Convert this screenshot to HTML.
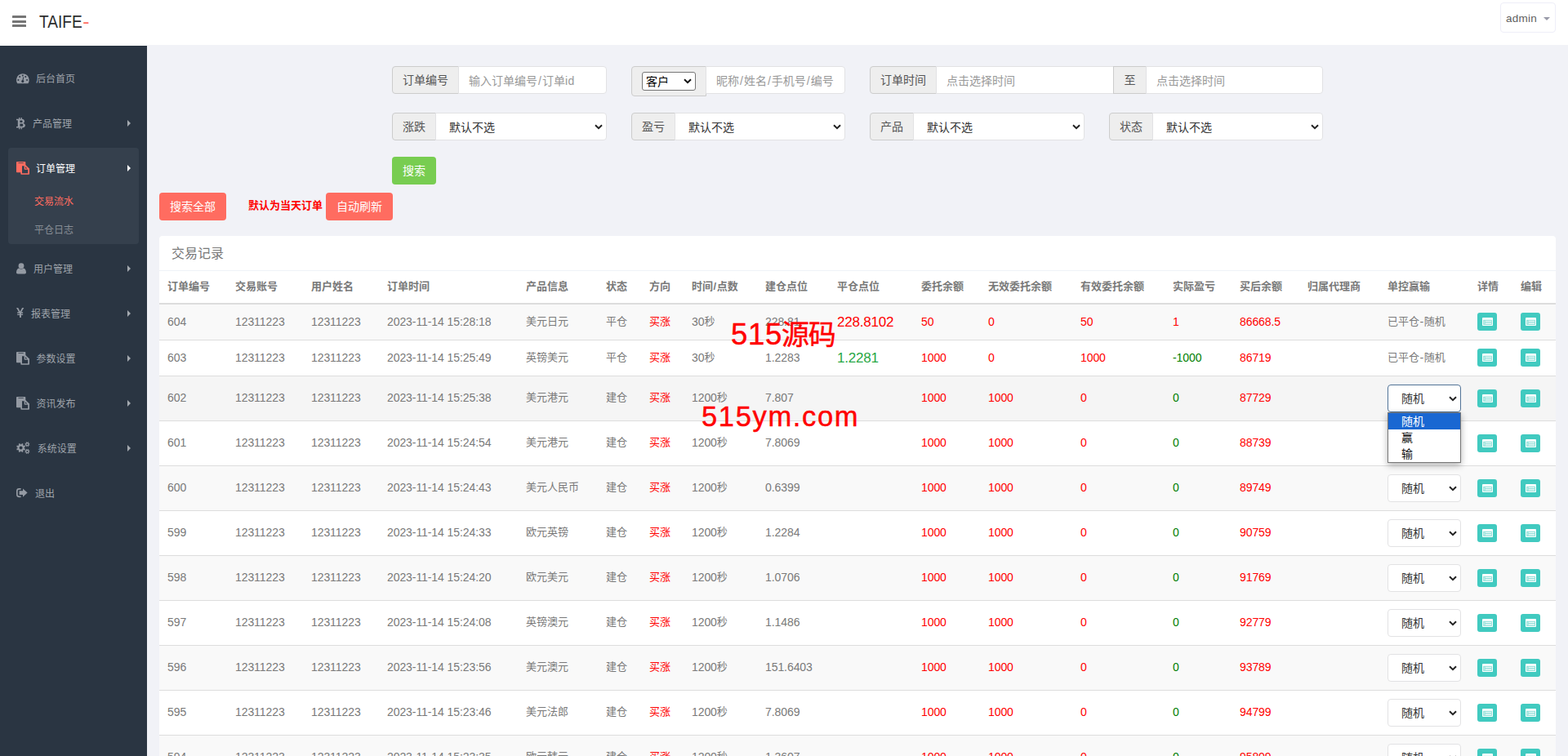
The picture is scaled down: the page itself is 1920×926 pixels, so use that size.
<!DOCTYPE html>
<html lang="zh-CN"><head><meta charset="utf-8"><title>交易记录</title>
<style>
*{box-sizing:border-box;margin:0;padding:0}
html,body{width:1920px;height:926px;overflow:hidden}
body{position:relative;background:#f1f2f7;color:#797979;font-family:"Liberation Sans","Noto Sans CJK SC",sans-serif;font-size:13px;line-height:1.42857}
.abs{position:absolute}
#header{position:absolute;left:0;top:0;width:1920px;height:55px;background:#fff}
#burger{position:absolute;left:15px;top:19px;width:17px;height:14px}
#burger i{position:absolute;left:0;width:17px;height:3px;background:#767676;border-radius:.5px}
#logo{position:absolute;left:48px;top:12px;font-size:22.600px;line-height:30px;color:#2e2e2e;white-space:nowrap;transform:scaleX(.845);transform-origin:0 50%}
#logo span{color:#ff6c60;display:inline-block;transform:scaleX(1.3);transform-origin:0 50%;margin-left:.8px}
#user{position:absolute;left:1837px;top:3px;width:68px;height:37px;border:1px solid #eeeef8;border-radius:4px;background:#fff;color:#606060;font-size:13.500px;line-height:37px;padding-left:6px;white-space:nowrap;letter-spacing:.25px}
#user b{position:absolute;left:52px;top:17px;width:0;height:0;border-left:4px solid transparent;border-right:4px solid transparent;border-top:4px solid #999aa8}
#side{position:absolute;left:0;top:56px;width:180px;height:870px;background:#2a3542;box-shadow:0 -1px 0 #fff}
#side .act{position:absolute;left:10px;top:125px;width:160px;height:118px;background:#35404d;border-radius:4px}
.mi{position:absolute;left:0;width:180px;height:20px;line-height:20px;font-size:12px;color:#9fa4ab;white-space:nowrap}
.mi svg{position:absolute;overflow:visible}
.mi .t{position:absolute;top:1px}
.mi .ar{position:absolute;left:156px;top:6px;width:0;height:0;border-top:4px solid transparent;border-bottom:4px solid transparent;border-left:4px solid #a4a9af}
.mi.on{color:#fff}
.mi.on .ar{border-left-color:#fff}
.grp{position:absolute;height:34px}
.addon{position:absolute;top:0;left:0;height:34px;background:#eee;border:1px solid #ccc;border-radius:4px 0 0 4px;color:#555;font-size:14px;line-height:32px;text-align:center;white-space:nowrap}
.inp{position:absolute;top:0;height:34px;background:#fff;border:1px solid #e2e2e4;border-radius:0 4px 4px 0;font-size:14px;line-height:32px;padding-left:12px;padding-top:1px;color:#999;white-space:nowrap;overflow:hidden}
.sel{color:#333;padding-left:16px}
.chev{position:absolute;right:4.400px;top:13px;width:10px;height:7px}
.btn{position:absolute;height:34px;border-radius:4px;color:#fff;font-size:14px;line-height:34px;text-align:center;white-space:nowrap}
#panel{position:absolute;left:195px;top:289px;width:1710px;height:700px;background:#fff;border-radius:4px 4px 0 0}
#ptitle{position:absolute;left:15px;top:10px;font-size:16px;line-height:23px;color:#797979;font-weight:400}
#pline{position:absolute;left:0;top:42px;width:1710px;height:1px;background:#eff2f7}
table{position:absolute;left:0;top:43px;width:1710px;border-collapse:collapse;table-layout:fixed;font-size:13px}
th,td{padding:0 0 0 10px;text-align:left;vertical-align:middle;white-space:nowrap;overflow:visible;font-weight:400}
th{height:40px;border-bottom:2px solid #ddd;font-weight:700;color:#797979}
td{border-top:1px solid #ddd;line-height:20px}
.n{font-size:14px;line-height:1;letter-spacing:-.08px;position:relative;top:1px}
tr.s td{height:44px}
tr.s:first-child td{padding-bottom:.5px}
tr.b td{height:55px;padding-bottom:1px}
tr.b .ib,tr.b .ts{top:1px}
tr.o td{background:#f9f9f9}
tr.h td{background:#f5f5f5}
.sl{font-style:normal;padding:0 1px}
.r{color:#f00}.g{color:#008000}
.big{font-size:17px;line-height:1;letter-spacing:-.2px;position:relative;top:2px}
.lg{color:#28a745}
.rd{color:#f00}
.ib{display:block;width:24px;height:22px;border-radius:3px;background:#41cac0;position:relative}
.ib svg{position:absolute;left:6px;top:6.200px}
.ts{display:block;position:relative;width:90px;height:34px;border:1px solid #e2e2e4;border-radius:4px;background:#fff;color:#333;font-size:14px;line-height:32px;padding-left:16px;letter-spacing:0}
.ts.f{border-color:#517397}
#pop{position:absolute;left:1699px;top:505px;width:90px;height:62px;background:#fff;border:1px solid #767676;box-shadow:0 3px 8px rgba(0,0,0,.3);font-size:14px;color:#111;z-index:5}
#pop div{height:20px;line-height:20px;padding-left:16px}
#pop .hl{background:#1967d2;color:#fff}
.wm{position:absolute;color:#f00;white-space:nowrap;font-family:"Liberation Sans","Noto Sans CJK SC",sans-serif;z-index:4;-webkit-text-stroke:.45px #f00}
.wm span{display:inline-block;vertical-align:baseline}
</style></head><body>
<div id="header"><div id="burger"><i style="top:0"></i><i style="top:5.500px"></i><i style="top:11px"></i></div><div id="logo">TAIFE<span>-</span></div><div id="user">admin<b></b></div></div>
<div id="side"><div class="act"></div>
<div class="mi" style="top:30px"><svg style="left:19.7px;top:3.9px" width="15.7" height="12.3" viewBox="0 0 15.700 12.300" fill="#949aa3"><path d="M1.300 12.300A7.850 7.850 0 1 1 14.400 12.300Z"/><g fill="#2a3542"><circle cx="7.800" cy="2.400" r="1"/><circle cx="4.200" cy="4" r="1"/><circle cx="11.300" cy="4" r="1"/><circle cx="2.400" cy="7.900" r="1"/><circle cx="13.100" cy="7.900" r="1"/><circle cx="7.800" cy="9.600" r="1.550"/><path d="M8.300 4.300l.9.200-.8 4.800-1.100-.2z"/></g></svg><span class="t" style="left:44px">后台首页</span></div>
<div class="mi" style="top:85px"><svg style="left:20px;top:2.8px" width="11" height="14.2" viewBox="0 0 11 14.200" fill="#949aa3"><path fill-rule="evenodd" d="M0 1.700H6.500C8.800 1.700 10 2.900 10 4.600C10 5.700 9.400 6.500 8.500 6.900C9.900 7.300 10.900 8.200 10.900 9.600C10.900 11.600 9.400 12.500 7 12.500H0V10.900H1.800V3.300H0ZM4.400 3.400V6H6.200C7.100 6 7.600 5.500 7.600 4.700C7.600 3.900 7.100 3.400 6.200 3.400ZM4.400 7.600V10.800H6.600C7.700 10.800 8.300 10.200 8.300 9.200C8.300 8.200 7.700 7.600 6.600 7.600Z"/><path d="M3.100 0h1.300v2H3.100zM5.600 0h1.300v2H5.600zM3.100 12.200h1.300v2H3.100zM5.600 12.200h1.300v2H5.600z"/></svg><span class="t" style="left:40px">产品管理</span><span class="ar"></span></div>
<div class="mi on" style="top:140px"><svg style="left:19.9px;top:1.8px" width="16" height="15.8" viewBox="0 0 16 15.800" fill="#ff6c60"><path d="M.8 0h9.700c.4 0 .8.400.8.800V13.200H.8c-.4 0-.8-.4-.8-.8V.8C0 .4.400 0 .800 0z"/><rect x="2.300" y="1.300" width="6.600" height=".8" rx=".4" fill="#35404d"/><path d="M5.300 4.100h5.900l4.800 4.300v6.600c0 .4-.4.800-.8.800H6.100c-.4 0-.8-.4-.8-.8z"/><path d="M7 5.300h2.700v3.700c0 .4.300.7.700.7h3.800v4.500H7z" fill="#35404d"/><path d="M11 6.100l2.100 2.300H11z" fill="#35404d"/></svg><span class="t" style="left:44px">订单管理</span><span class="ar"></span></div>
<div class="mi" style="top:180px;color:#ff6c60"><span class="t" style="left:42px">交易流水</span></div>
<div class="mi" style="top:215px;color:#878d95"><span class="t" style="left:42px">平仓日志</span></div>
<div class="mi" style="top:263px"><svg style="left:20px;top:2.5px" width="12" height="13.5" viewBox="0 0 12 13.500" fill="#949aa3"><circle cx="6" cy="3.700" r="3.400"/><path d="M0 11.700c0-3 1.400-5 3.100-5.300.8.700 1.800 1.100 2.900 1.100s2.100-.4 2.900-1.100c1.700.3 3.100 2.300 3.100 5.300 0 1-.8 1.700-1.800 1.700H1.800c-1 0-1.800-.7-1.800-1.700z"/></svg><span class="t" style="left:41px">用户管理</span><span class="ar"></span></div>
<div class="mi" style="top:318px"><svg style="left:19.8px;top:2.9px" width="9.3" height="12" viewBox="0 0 9.300 12" fill="#949aa3"><path d="M4 12V9.100H1.200V7.700H4V6.700H1.200V5.300h1.900L0 0h2.200l2.400 4.400h.1L7.100 0h2.200L6.200 5.300h1.900v1.400H5.900v1h2.200v1.400H5.900V12z"/></svg><span class="t" style="left:38px">报表管理</span><span class="ar"></span></div>
<div class="mi" style="top:373px"><svg style="left:19.9px;top:1.8px" width="16" height="15.8" viewBox="0 0 16 15.800" fill="#949aa3"><path d="M.8 0h9.700c.4 0 .8.400.8.800V13.200H.8c-.4 0-.8-.4-.8-.8V.8C0 .4.400 0 .800 0z"/><rect x="2.300" y="1.300" width="6.600" height=".8" rx=".4" fill="#2a3542"/><path d="M5.300 4.100h5.900l4.800 4.300v6.600c0 .4-.4.800-.8.800H6.100c-.4 0-.8-.4-.8-.8z"/><path d="M7 5.300h2.700v3.700c0 .4.300.7.700.7h3.800v4.500H7z" fill="#2a3542"/><path d="M11 6.100l2.100 2.300H11z" fill="#2a3542"/></svg><span class="t" style="left:44.6px">参数设置</span><span class="ar"></span></div>
<div class="mi" style="top:428px"><svg style="left:19.9px;top:1.8px" width="16" height="15.8" viewBox="0 0 16 15.800" fill="#949aa3"><path d="M.8 0h9.700c.4 0 .8.400.8.800V13.200H.8c-.4 0-.8-.4-.8-.8V.8C0 .4.400 0 .800 0z"/><rect x="2.300" y="1.300" width="6.600" height=".8" rx=".4" fill="#2a3542"/><path d="M5.300 4.100h5.900l4.800 4.300v6.600c0 .4-.4.800-.8.800H6.100c-.4 0-.8-.4-.8-.8z"/><path d="M7 5.300h2.700v3.700c0 .4.300.7.700.7h3.800v4.500H7z" fill="#2a3542"/><path d="M11 6.100l2.100 2.300H11z" fill="#2a3542"/></svg><span class="t" style="left:44.5px">资讯发布</span><span class="ar"></span></div>
<div class="mi" style="top:483px"><svg style="left:19.7px;top:2.2px" width="16.5" height="15.1" viewBox="0 0 16.500 15.100" fill="#949aa3"><path fill-rule="evenodd" d="M9.75 8.16L11.05 8.81L10.37 10.43L9.00 9.97L8.07 10.90L8.53 12.27L6.91 12.95L6.26 11.65L4.94 11.65L4.29 12.95L2.67 12.27L3.13 10.90L2.20 9.97L0.83 10.43L0.15 8.81L1.45 8.16L1.45 6.84L0.15 6.19L0.83 4.57L2.20 5.03L3.13 4.10L2.67 2.73L4.29 2.05L4.94 3.35L6.26 3.35L6.91 2.05L8.53 2.73L8.07 4.10L9.00 5.03L10.37 4.57L11.05 6.19L9.75 6.84ZM3.60 7.50a2.00 2.00 0 1 0 4.00 0a2.00 2.00 0 1 0 -4.00 0ZM15.57 3.54L16.41 3.92L16.04 4.82L15.18 4.49L14.69 4.98L15.02 5.84L14.12 6.21L13.74 5.37L13.06 5.37L12.68 6.21L11.78 5.84L12.11 4.98L11.62 4.49L10.76 4.82L10.39 3.92L11.23 3.54L11.23 2.86L10.39 2.48L10.76 1.58L11.62 1.91L12.11 1.42L11.78 0.56L12.68 0.19L13.06 1.03L13.74 1.03L14.12 0.19L15.02 0.56L14.69 1.42L15.18 1.91L16.04 1.58L16.41 2.48L15.57 2.86ZM12.40 3.20a1.00 1.00 0 1 0 2.00 0a1.00 1.00 0 1 0 -2.00 0ZM15.57 12.24L16.41 12.62L16.04 13.52L15.18 13.19L14.69 13.68L15.02 14.54L14.12 14.91L13.74 14.07L13.06 14.07L12.68 14.91L11.78 14.54L12.11 13.68L11.62 13.19L10.76 13.52L10.39 12.62L11.23 12.24L11.23 11.56L10.39 11.18L10.76 10.28L11.62 10.61L12.11 10.12L11.78 9.26L12.68 8.89L13.06 9.73L13.74 9.73L14.12 8.89L15.02 9.26L14.69 10.12L15.18 10.61L16.04 10.28L16.41 11.18L15.57 11.56ZM12.40 11.90a1.00 1.00 0 1 0 2.00 0a1.00 1.00 0 1 0 -2.00 0Z"/></svg><span class="t" style="left:45.8px">系统设置</span><span class="ar"></span></div>
<div class="mi" style="top:538px"><svg style="left:19.7px;top:4.2px" width="13.6" height="11.2" viewBox="0 0 13.600 11.200" fill="#949aa3"><path d="M5.600 0v1.700H3.400c-.9 0-1.700.8-1.700 1.700v4.400c0 .9.800 1.700 1.700 1.700h2.200v1.700H3.400A3.400 3.400 0 0 1 0 7.800V3.400A3.400 3.400 0 0 1 3.400 0z"/><path d="M8 .4l5.600 5.200L8 10.800V7.900H3.600V3.300H8z"/></svg><span class="t" style="left:43px">退出</span></div>
</div>
<div class="grp" style="left:480px;top:81px;width:263px"><span class="addon" style="left:0px;width:82px;">订单编号</span><span class="inp" style="left:81px;width:182px;">输入订单编号<i class="sl">/</i>订单<span style="letter-spacing:.6px">id</span></span></div>
<div class="grp" style="left:773px;top:81px;width:262px"><span class="addon" style="left:0;width:92px;height:37px"></span><span class="abs" style="left:13px;top:7px;width:66px;height:23px;border:1px solid #767676;border-radius:3px;background:#fff;color:#000;font-size:14px;line-height:22px;padding-left:4px">客户<svg class="abs" style="right:4px;top:7px" width="10" height="7" viewBox="0 0 10 7"><path d="M1 1.200 L5 5.200 L9 1.200" fill="none" stroke="#111" stroke-width="2"/></svg></span><span class="inp" style="left:91px;width:171px;">昵称<i class="sl">/</i>姓名<i class="sl">/</i>手机号<i class="sl">/</i>编号</span></div>
<div class="grp" style="left:1065px;top:81px;width:555px"><span class="addon" style="left:0px;width:82px;">订单时间</span><span class="inp" style="left:81px;width:218px;border-radius:0">点击选择时间</span><span class="addon" style="left:298px;width:41px;border-radius:0">至</span><span class="inp" style="left:338px;width:217px;">点击选择时间</span></div>
<div class="grp" style="left:480px;top:138px;width:263px"><span class="addon" style="left:0px;width:54px;">涨跌</span><span class="inp sel" style="left:53px;width:210px">默认不选<svg class="chev" viewBox="0 0 10 7"><path d="M1 1.2 L5 5.2 L9 1.2" fill="none" stroke="#222" stroke-width="2"/></svg></span></div>
<div class="grp" style="left:773px;top:138px;width:262px"><span class="addon" style="left:0px;width:54px;">盈亏</span><span class="inp sel" style="left:53px;width:209px">默认不选<svg class="chev" viewBox="0 0 10 7"><path d="M1 1.2 L5 5.2 L9 1.2" fill="none" stroke="#222" stroke-width="2"/></svg></span></div>
<div class="grp" style="left:1065px;top:138px;width:263px"><span class="addon" style="left:0px;width:54px;">产品</span><span class="inp sel" style="left:53px;width:210px">默认不选<svg class="chev" viewBox="0 0 10 7"><path d="M1 1.2 L5 5.2 L9 1.2" fill="none" stroke="#222" stroke-width="2"/></svg></span></div>
<div class="grp" style="left:1358px;top:138px;width:262px"><span class="addon" style="left:0px;width:54px;">状态</span><span class="inp sel" style="left:53px;width:209px">默认不选<svg class="chev" viewBox="0 0 10 7"><path d="M1 1.2 L5 5.2 L9 1.2" fill="none" stroke="#222" stroke-width="2"/></svg></span></div>
<span class="btn" style="left:480px;top:192px;width:54px;background:#78cd51">搜索</span>
<span class="btn" style="left:195px;top:236px;width:82px;background:#ff6c60">搜索全部</span>
<span class="abs" style="left:304px;top:242px;color:#f00;font-weight:700;font-size:13px;line-height:20px;white-space:nowrap">默认为当天订单</span>
<span class="btn" style="left:399px;top:236px;width:82px;background:#ff6c60">自动刷新</span>
<div id="panel"><div id="ptitle">交易记录</div><div id="pline"></div>
<table><colgroup><col style="width:83px"><col style="width:93px"><col style="width:93px"><col style="width:170px"><col style="width:98px"><col style="width:53px"><col style="width:52px"><col style="width:90px"><col style="width:88px"><col style="width:103px"><col style="width:82px"><col style="width:113px"><col style="width:113px"><col style="width:82px"><col style="width:83px"><col style="width:98px"><col style="width:110px"><col style="width:53px"><col style="width:53px"></colgroup><thead><tr><th>订单编号</th><th>交易账号</th><th>用户姓名</th><th>订单时间</th><th>产品信息</th><th>状态</th><th>方向</th><th>时间<i class="sl" style="padding:0 .5px">/</i>点数</th><th>建仓点位</th><th>平仓点位</th><th>委托余额</th><th>无效委托余额</th><th>有效委托余额</th><th>实际盈亏</th><th>买后余额</th><th>归属代理商</th><th>单控赢输</th><th>详情</th><th>编辑</th></tr></thead><tbody><tr class="s o"><td><span class="n">604</span></td><td><span class="n">12311223</span></td><td><span class="n">12311223</span></td><td><span class="n">2023-11-14 15:28:18</span></td><td>美元日元</td><td>平仓</td><td class="r">买涨</td><td><span class="n">30</span>秒</td><td><span class="n">228.81</span></td><td><span class="big rd">228.8102</span></td><td class="r"><span class="n">50</span></td><td class="r"><span class="n">0</span></td><td class="r"><span class="n">50</span></td><td class="r"><span class="n">1</span></td><td class="r"><span class="n">86668.5</span></td><td></td><td>已平仓<span class="n" style="padding:0 .6px">-</span>随机</td><td><span class="ib"><svg width="13" height="10" viewBox="0 0 13 10"><rect x="0" y="0" width="13" height="10" rx="1" fill="#fff"/><rect x="1.100" y="2.800" width="10.800" height="6.100" fill="#8fe0d9"/><rect x="3.600" y="3.900" width="7.400" height="1" fill="#fff"/><rect x="3.600" y="6.100" width="7.400" height="1.700" fill="#e3f7f5"/><rect x="1.900" y="3.900" width=".9" height="3.900" fill="#c8efeb"/></svg></span></td><td><span class="ib"><svg width="13" height="10" viewBox="0 0 13 10"><rect x="0" y="0" width="13" height="10" rx="1" fill="#fff"/><rect x="1.100" y="2.800" width="10.800" height="6.100" fill="#8fe0d9"/><rect x="3.600" y="3.900" width="7.400" height="1" fill="#fff"/><rect x="3.600" y="6.100" width="7.400" height="1.700" fill="#e3f7f5"/><rect x="1.900" y="3.900" width=".9" height="3.900" fill="#c8efeb"/></svg></span></td></tr><tr class="s"><td><span class="n">603</span></td><td><span class="n">12311223</span></td><td><span class="n">12311223</span></td><td><span class="n">2023-11-14 15:25:49</span></td><td>英镑美元</td><td>平仓</td><td class="r">买涨</td><td><span class="n">30</span>秒</td><td><span class="n">1.2283</span></td><td><span class="big lg">1.2281</span></td><td class="r"><span class="n">1000</span></td><td class="r"><span class="n">0</span></td><td class="r"><span class="n">1000</span></td><td class="g"><span class="n">-1000</span></td><td class="r"><span class="n">86719</span></td><td></td><td>已平仓<span class="n" style="padding:0 .6px">-</span>随机</td><td><span class="ib"><svg width="13" height="10" viewBox="0 0 13 10"><rect x="0" y="0" width="13" height="10" rx="1" fill="#fff"/><rect x="1.100" y="2.800" width="10.800" height="6.100" fill="#8fe0d9"/><rect x="3.600" y="3.900" width="7.400" height="1" fill="#fff"/><rect x="3.600" y="6.100" width="7.400" height="1.700" fill="#e3f7f5"/><rect x="1.900" y="3.900" width=".9" height="3.900" fill="#c8efeb"/></svg></span></td><td><span class="ib"><svg width="13" height="10" viewBox="0 0 13 10"><rect x="0" y="0" width="13" height="10" rx="1" fill="#fff"/><rect x="1.100" y="2.800" width="10.800" height="6.100" fill="#8fe0d9"/><rect x="3.600" y="3.900" width="7.400" height="1" fill="#fff"/><rect x="3.600" y="6.100" width="7.400" height="1.700" fill="#e3f7f5"/><rect x="1.900" y="3.900" width=".9" height="3.900" fill="#c8efeb"/></svg></span></td></tr><tr class="b o h"><td><span class="n">602</span></td><td><span class="n">12311223</span></td><td><span class="n">12311223</span></td><td><span class="n">2023-11-14 15:25:38</span></td><td>美元港元</td><td>建仓</td><td class="r">买涨</td><td><span class="n">1200</span>秒</td><td><span class="n">7.807</span></td><td></td><td class="r"><span class="n">1000</span></td><td class="r"><span class="n">1000</span></td><td class="r"><span class="n">0</span></td><td class="g"><span class="n">0</span></td><td class="r"><span class="n">87729</span></td><td></td><td><span class="ts f">随机<svg class="chev" viewBox="0 0 10 7"><path d="M1 1.2 L5 5.2 L9 1.2" fill="none" stroke="#222" stroke-width="2"/></svg></span></td><td><span class="ib"><svg width="13" height="10" viewBox="0 0 13 10"><rect x="0" y="0" width="13" height="10" rx="1" fill="#fff"/><rect x="1.100" y="2.800" width="10.800" height="6.100" fill="#8fe0d9"/><rect x="3.600" y="3.900" width="7.400" height="1" fill="#fff"/><rect x="3.600" y="6.100" width="7.400" height="1.700" fill="#e3f7f5"/><rect x="1.900" y="3.900" width=".9" height="3.900" fill="#c8efeb"/></svg></span></td><td><span class="ib"><svg width="13" height="10" viewBox="0 0 13 10"><rect x="0" y="0" width="13" height="10" rx="1" fill="#fff"/><rect x="1.100" y="2.800" width="10.800" height="6.100" fill="#8fe0d9"/><rect x="3.600" y="3.900" width="7.400" height="1" fill="#fff"/><rect x="3.600" y="6.100" width="7.400" height="1.700" fill="#e3f7f5"/><rect x="1.900" y="3.900" width=".9" height="3.900" fill="#c8efeb"/></svg></span></td></tr><tr class="b"><td><span class="n">601</span></td><td><span class="n">12311223</span></td><td><span class="n">12311223</span></td><td><span class="n">2023-11-14 15:24:54</span></td><td>美元港元</td><td>建仓</td><td class="r">买涨</td><td><span class="n">1200</span>秒</td><td><span class="n">7.8069</span></td><td></td><td class="r"><span class="n">1000</span></td><td class="r"><span class="n">1000</span></td><td class="r"><span class="n">0</span></td><td class="g"><span class="n">0</span></td><td class="r"><span class="n">88739</span></td><td></td><td></td><td><span class="ib"><svg width="13" height="10" viewBox="0 0 13 10"><rect x="0" y="0" width="13" height="10" rx="1" fill="#fff"/><rect x="1.100" y="2.800" width="10.800" height="6.100" fill="#8fe0d9"/><rect x="3.600" y="3.900" width="7.400" height="1" fill="#fff"/><rect x="3.600" y="6.100" width="7.400" height="1.700" fill="#e3f7f5"/><rect x="1.900" y="3.900" width=".9" height="3.900" fill="#c8efeb"/></svg></span></td><td><span class="ib"><svg width="13" height="10" viewBox="0 0 13 10"><rect x="0" y="0" width="13" height="10" rx="1" fill="#fff"/><rect x="1.100" y="2.800" width="10.800" height="6.100" fill="#8fe0d9"/><rect x="3.600" y="3.900" width="7.400" height="1" fill="#fff"/><rect x="3.600" y="6.100" width="7.400" height="1.700" fill="#e3f7f5"/><rect x="1.900" y="3.900" width=".9" height="3.900" fill="#c8efeb"/></svg></span></td></tr><tr class="b o"><td><span class="n">600</span></td><td><span class="n">12311223</span></td><td><span class="n">12311223</span></td><td><span class="n">2023-11-14 15:24:43</span></td><td>美元人民币</td><td>建仓</td><td class="r">买涨</td><td><span class="n">1200</span>秒</td><td><span class="n">0.6399</span></td><td></td><td class="r"><span class="n">1000</span></td><td class="r"><span class="n">1000</span></td><td class="r"><span class="n">0</span></td><td class="g"><span class="n">0</span></td><td class="r"><span class="n">89749</span></td><td></td><td><span class="ts">随机<svg class="chev" viewBox="0 0 10 7"><path d="M1 1.2 L5 5.2 L9 1.2" fill="none" stroke="#222" stroke-width="2"/></svg></span></td><td><span class="ib"><svg width="13" height="10" viewBox="0 0 13 10"><rect x="0" y="0" width="13" height="10" rx="1" fill="#fff"/><rect x="1.100" y="2.800" width="10.800" height="6.100" fill="#8fe0d9"/><rect x="3.600" y="3.900" width="7.400" height="1" fill="#fff"/><rect x="3.600" y="6.100" width="7.400" height="1.700" fill="#e3f7f5"/><rect x="1.900" y="3.900" width=".9" height="3.900" fill="#c8efeb"/></svg></span></td><td><span class="ib"><svg width="13" height="10" viewBox="0 0 13 10"><rect x="0" y="0" width="13" height="10" rx="1" fill="#fff"/><rect x="1.100" y="2.800" width="10.800" height="6.100" fill="#8fe0d9"/><rect x="3.600" y="3.900" width="7.400" height="1" fill="#fff"/><rect x="3.600" y="6.100" width="7.400" height="1.700" fill="#e3f7f5"/><rect x="1.900" y="3.900" width=".9" height="3.900" fill="#c8efeb"/></svg></span></td></tr><tr class="b"><td><span class="n">599</span></td><td><span class="n">12311223</span></td><td><span class="n">12311223</span></td><td><span class="n">2023-11-14 15:24:33</span></td><td>欧元英镑</td><td>建仓</td><td class="r">买涨</td><td><span class="n">1200</span>秒</td><td><span class="n">1.2284</span></td><td></td><td class="r"><span class="n">1000</span></td><td class="r"><span class="n">1000</span></td><td class="r"><span class="n">0</span></td><td class="g"><span class="n">0</span></td><td class="r"><span class="n">90759</span></td><td></td><td><span class="ts">随机<svg class="chev" viewBox="0 0 10 7"><path d="M1 1.2 L5 5.2 L9 1.2" fill="none" stroke="#222" stroke-width="2"/></svg></span></td><td><span class="ib"><svg width="13" height="10" viewBox="0 0 13 10"><rect x="0" y="0" width="13" height="10" rx="1" fill="#fff"/><rect x="1.100" y="2.800" width="10.800" height="6.100" fill="#8fe0d9"/><rect x="3.600" y="3.900" width="7.400" height="1" fill="#fff"/><rect x="3.600" y="6.100" width="7.400" height="1.700" fill="#e3f7f5"/><rect x="1.900" y="3.900" width=".9" height="3.900" fill="#c8efeb"/></svg></span></td><td><span class="ib"><svg width="13" height="10" viewBox="0 0 13 10"><rect x="0" y="0" width="13" height="10" rx="1" fill="#fff"/><rect x="1.100" y="2.800" width="10.800" height="6.100" fill="#8fe0d9"/><rect x="3.600" y="3.900" width="7.400" height="1" fill="#fff"/><rect x="3.600" y="6.100" width="7.400" height="1.700" fill="#e3f7f5"/><rect x="1.900" y="3.900" width=".9" height="3.900" fill="#c8efeb"/></svg></span></td></tr><tr class="b o"><td><span class="n">598</span></td><td><span class="n">12311223</span></td><td><span class="n">12311223</span></td><td><span class="n">2023-11-14 15:24:20</span></td><td>欧元美元</td><td>建仓</td><td class="r">买涨</td><td><span class="n">1200</span>秒</td><td><span class="n">1.0706</span></td><td></td><td class="r"><span class="n">1000</span></td><td class="r"><span class="n">1000</span></td><td class="r"><span class="n">0</span></td><td class="g"><span class="n">0</span></td><td class="r"><span class="n">91769</span></td><td></td><td><span class="ts">随机<svg class="chev" viewBox="0 0 10 7"><path d="M1 1.2 L5 5.2 L9 1.2" fill="none" stroke="#222" stroke-width="2"/></svg></span></td><td><span class="ib"><svg width="13" height="10" viewBox="0 0 13 10"><rect x="0" y="0" width="13" height="10" rx="1" fill="#fff"/><rect x="1.100" y="2.800" width="10.800" height="6.100" fill="#8fe0d9"/><rect x="3.600" y="3.900" width="7.400" height="1" fill="#fff"/><rect x="3.600" y="6.100" width="7.400" height="1.700" fill="#e3f7f5"/><rect x="1.900" y="3.900" width=".9" height="3.900" fill="#c8efeb"/></svg></span></td><td><span class="ib"><svg width="13" height="10" viewBox="0 0 13 10"><rect x="0" y="0" width="13" height="10" rx="1" fill="#fff"/><rect x="1.100" y="2.800" width="10.800" height="6.100" fill="#8fe0d9"/><rect x="3.600" y="3.900" width="7.400" height="1" fill="#fff"/><rect x="3.600" y="6.100" width="7.400" height="1.700" fill="#e3f7f5"/><rect x="1.900" y="3.900" width=".9" height="3.900" fill="#c8efeb"/></svg></span></td></tr><tr class="b"><td><span class="n">597</span></td><td><span class="n">12311223</span></td><td><span class="n">12311223</span></td><td><span class="n">2023-11-14 15:24:08</span></td><td>英镑澳元</td><td>建仓</td><td class="r">买涨</td><td><span class="n">1200</span>秒</td><td><span class="n">1.1486</span></td><td></td><td class="r"><span class="n">1000</span></td><td class="r"><span class="n">1000</span></td><td class="r"><span class="n">0</span></td><td class="g"><span class="n">0</span></td><td class="r"><span class="n">92779</span></td><td></td><td><span class="ts">随机<svg class="chev" viewBox="0 0 10 7"><path d="M1 1.2 L5 5.2 L9 1.2" fill="none" stroke="#222" stroke-width="2"/></svg></span></td><td><span class="ib"><svg width="13" height="10" viewBox="0 0 13 10"><rect x="0" y="0" width="13" height="10" rx="1" fill="#fff"/><rect x="1.100" y="2.800" width="10.800" height="6.100" fill="#8fe0d9"/><rect x="3.600" y="3.900" width="7.400" height="1" fill="#fff"/><rect x="3.600" y="6.100" width="7.400" height="1.700" fill="#e3f7f5"/><rect x="1.900" y="3.900" width=".9" height="3.900" fill="#c8efeb"/></svg></span></td><td><span class="ib"><svg width="13" height="10" viewBox="0 0 13 10"><rect x="0" y="0" width="13" height="10" rx="1" fill="#fff"/><rect x="1.100" y="2.800" width="10.800" height="6.100" fill="#8fe0d9"/><rect x="3.600" y="3.900" width="7.400" height="1" fill="#fff"/><rect x="3.600" y="6.100" width="7.400" height="1.700" fill="#e3f7f5"/><rect x="1.900" y="3.900" width=".9" height="3.900" fill="#c8efeb"/></svg></span></td></tr><tr class="b o"><td><span class="n">596</span></td><td><span class="n">12311223</span></td><td><span class="n">12311223</span></td><td><span class="n">2023-11-14 15:23:56</span></td><td>美元澳元</td><td>建仓</td><td class="r">买涨</td><td><span class="n">1200</span>秒</td><td><span class="n">151.6403</span></td><td></td><td class="r"><span class="n">1000</span></td><td class="r"><span class="n">1000</span></td><td class="r"><span class="n">0</span></td><td class="g"><span class="n">0</span></td><td class="r"><span class="n">93789</span></td><td></td><td><span class="ts">随机<svg class="chev" viewBox="0 0 10 7"><path d="M1 1.2 L5 5.2 L9 1.2" fill="none" stroke="#222" stroke-width="2"/></svg></span></td><td><span class="ib"><svg width="13" height="10" viewBox="0 0 13 10"><rect x="0" y="0" width="13" height="10" rx="1" fill="#fff"/><rect x="1.100" y="2.800" width="10.800" height="6.100" fill="#8fe0d9"/><rect x="3.600" y="3.900" width="7.400" height="1" fill="#fff"/><rect x="3.600" y="6.100" width="7.400" height="1.700" fill="#e3f7f5"/><rect x="1.900" y="3.900" width=".9" height="3.900" fill="#c8efeb"/></svg></span></td><td><span class="ib"><svg width="13" height="10" viewBox="0 0 13 10"><rect x="0" y="0" width="13" height="10" rx="1" fill="#fff"/><rect x="1.100" y="2.800" width="10.800" height="6.100" fill="#8fe0d9"/><rect x="3.600" y="3.900" width="7.400" height="1" fill="#fff"/><rect x="3.600" y="6.100" width="7.400" height="1.700" fill="#e3f7f5"/><rect x="1.900" y="3.900" width=".9" height="3.900" fill="#c8efeb"/></svg></span></td></tr><tr class="b"><td><span class="n">595</span></td><td><span class="n">12311223</span></td><td><span class="n">12311223</span></td><td><span class="n">2023-11-14 15:23:46</span></td><td>美元法郎</td><td>建仓</td><td class="r">买涨</td><td><span class="n">1200</span>秒</td><td><span class="n">7.8069</span></td><td></td><td class="r"><span class="n">1000</span></td><td class="r"><span class="n">1000</span></td><td class="r"><span class="n">0</span></td><td class="g"><span class="n">0</span></td><td class="r"><span class="n">94799</span></td><td></td><td><span class="ts">随机<svg class="chev" viewBox="0 0 10 7"><path d="M1 1.2 L5 5.2 L9 1.2" fill="none" stroke="#222" stroke-width="2"/></svg></span></td><td><span class="ib"><svg width="13" height="10" viewBox="0 0 13 10"><rect x="0" y="0" width="13" height="10" rx="1" fill="#fff"/><rect x="1.100" y="2.800" width="10.800" height="6.100" fill="#8fe0d9"/><rect x="3.600" y="3.900" width="7.400" height="1" fill="#fff"/><rect x="3.600" y="6.100" width="7.400" height="1.700" fill="#e3f7f5"/><rect x="1.900" y="3.900" width=".9" height="3.900" fill="#c8efeb"/></svg></span></td><td><span class="ib"><svg width="13" height="10" viewBox="0 0 13 10"><rect x="0" y="0" width="13" height="10" rx="1" fill="#fff"/><rect x="1.100" y="2.800" width="10.800" height="6.100" fill="#8fe0d9"/><rect x="3.600" y="3.900" width="7.400" height="1" fill="#fff"/><rect x="3.600" y="6.100" width="7.400" height="1.700" fill="#e3f7f5"/><rect x="1.900" y="3.900" width=".9" height="3.900" fill="#c8efeb"/></svg></span></td></tr><tr class="b o"><td><span class="n">594</span></td><td><span class="n">12311223</span></td><td><span class="n">12311223</span></td><td><span class="n">2023-11-14 15:23:35</span></td><td>欧元韩元</td><td>建仓</td><td class="r">买涨</td><td><span class="n">1200</span>秒</td><td><span class="n">1.3607</span></td><td></td><td class="r"><span class="n">1000</span></td><td class="r"><span class="n">1000</span></td><td class="r"><span class="n">0</span></td><td class="g"><span class="n">0</span></td><td class="r"><span class="n">95809</span></td><td></td><td><span class="ts">随机<svg class="chev" viewBox="0 0 10 7"><path d="M1 1.2 L5 5.2 L9 1.2" fill="none" stroke="#222" stroke-width="2"/></svg></span></td><td><span class="ib"><svg width="13" height="10" viewBox="0 0 13 10"><rect x="0" y="0" width="13" height="10" rx="1" fill="#fff"/><rect x="1.100" y="2.800" width="10.800" height="6.100" fill="#8fe0d9"/><rect x="3.600" y="3.900" width="7.400" height="1" fill="#fff"/><rect x="3.600" y="6.100" width="7.400" height="1.700" fill="#e3f7f5"/><rect x="1.900" y="3.900" width=".9" height="3.900" fill="#c8efeb"/></svg></span></td><td><span class="ib"><svg width="13" height="10" viewBox="0 0 13 10"><rect x="0" y="0" width="13" height="10" rx="1" fill="#fff"/><rect x="1.100" y="2.800" width="10.800" height="6.100" fill="#8fe0d9"/><rect x="3.600" y="3.900" width="7.400" height="1" fill="#fff"/><rect x="3.600" y="6.100" width="7.400" height="1.700" fill="#e3f7f5"/><rect x="1.900" y="3.900" width=".9" height="3.900" fill="#c8efeb"/></svg></span></td></tr></tbody></table>
</div>
<div id="pop"><div class="hl">随机</div><div>赢</div><div>输</div></div>
<div class="wm" style="left:895px;top:386px;font-size:36.500px;line-height:48px;letter-spacing:.7px">515<span style="font-size:34px;letter-spacing:-1.300px;margin-left:-1px">源码</span></div>
<div class="wm" style="left:859px;top:487px;font-size:34.500px;line-height:46px;letter-spacing:1.650px">515ym.com</div>
</body></html>
